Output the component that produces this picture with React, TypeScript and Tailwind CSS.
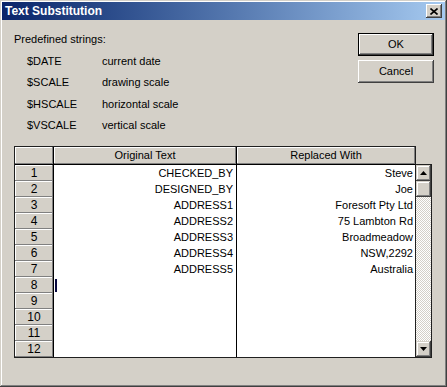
const rows: [string, string][] = [
  ['CHECKED_BY', 'Steve'],
  ['DESIGNED_BY', 'Joe'],
  ['ADDRESS1', 'Foresoft Pty Ltd'],
  ['ADDRESS2', '75 Lambton Rd'],
  ['ADDRESS3', 'Broadmeadow'],
  ['ADDRESS4', 'NSW,2292'],
  ['ADDRESS5', 'Australia'],
  ['', ''],
  ['', ''],
  ['', ''],
  ['', ''],
  ['', ''],
];

const strings = [
  ['$DATE', 'current date'],
  ['$SCALE', 'drawing scale'],
  ['$HSCALE', 'horizontal scale'],
  ['$VSCALE', 'vertical scale'],
];

export default function App() {
  return (
    <div className="w-[447px] h-[387px] bg-[#d4d0c8] p-[2px] flex flex-col font-['Liberation_Sans',Arial,sans-serif] text-[11px] text-black shadow-[inset_-1px_-1px_0_#404040,inset_1px_1px_0_#d4d0c8,inset_-2px_-2px_0_#808080,inset_2px_2px_0_#ffffff]">
      {/* Title bar */}
      <div className="h-[18px] flex items-center justify-between pl-[3px] pr-[3px] bg-gradient-to-r from-[#0a246a] to-[#a6caf0]">
        <span className="text-white font-bold text-[12px] leading-[13px]">Text Substitution</span>
        <div className="w-[16px] h-[14px] bg-[#d4d0c8] flex items-center justify-center shadow-[inset_-1px_-1px_0_#404040,inset_1px_1px_0_#ffffff,inset_-2px_-2px_0_#808080]">
          <svg width="8" height="7" viewBox="0 0 8 7">
            <path d="M0.5 0.5 L7.5 6.5 M7.5 0.5 L0.5 6.5" stroke="#000" strokeWidth="1.6" />
          </svg>
        </div>
      </div>

      {/* Top section */}
      <div className="h-[126px] flex justify-between pl-[12px] pr-[11px]">
        <div className="pt-[13px]">
          <p className="leading-[13px]">Predefined strings:</p>
          <div className="mt-[9px] pl-[13px]">
            {strings.map(([k, v]) => (
              <div key={k} className="h-[21.33px] flex leading-[13px]">
                <span className="w-[75px]">{k}</span>
                <span>{v}</span>
              </div>
            ))}
          </div>
        </div>
        <div className="pt-[13px] flex flex-col gap-[4px]">
          <button className="w-[76px] h-[23px] border border-black bg-[#d4d0c8] leading-[13px] shadow-[inset_-1px_-1px_0_#404040,inset_1px_1px_0_#ffffff,inset_-2px_-2px_0_#808080]">
            OK
          </button>
          <button className="w-[76px] h-[23px] bg-[#d4d0c8] leading-[13px] shadow-[inset_-1px_-1px_0_#404040,inset_1px_1px_0_#ffffff,inset_-2px_-2px_0_#808080,inset_2px_2px_0_#d4d0c8]">
            Cancel
          </button>
        </div>
      </div>

      {/* Grid */}
      <div className="pl-[12px] flex">
        <div className="w-[402px] border border-[#202020] flex flex-col">
          <div className="h-[18px] flex border-b border-black">
            <div className="w-[39px] border-r border-black bg-[#d4d0c8] shadow-[inset_-1px_-1px_0_#808080,inset_1px_1px_0_#ffffff]" />
            <div className="w-[183px] border-r border-black bg-[#d4d0c8] text-center leading-[17px] shadow-[inset_-1px_-1px_0_#808080,inset_1px_1px_0_#ffffff]">
              Original Text
            </div>
            <div className="flex-1 bg-[#d4d0c8] text-center leading-[17px] shadow-[inset_-1px_-1px_0_#808080,inset_1px_1px_0_#ffffff]">
              Replaced With
            </div>
          </div>
          {rows.map(([orig, repl], i) => (
            <div key={i} className="h-[16px] flex leading-[16px]">
              <div className="w-[39px] border-r border-black bg-[#d4d0c8] text-center text-[12px] shadow-[inset_-1px_-1px_0_#808080,inset_1px_1px_0_#ffffff]">
                {i + 1}
              </div>
              <div className="w-[183px] border-r border-black bg-white flex justify-end pr-[3px]">
                {i === 7 && <span className="mr-auto ml-[1px] mt-[2px] w-[2px] h-[13px] bg-[#0a0a40]" />}
                {orig}
              </div>
              <div className="flex-1 bg-white text-right pr-[2px]">{repl}</div>
            </div>
          ))}
        </div>

        {/* Scrollbar */}
        <div className="flex flex-col">
          <div className="h-[18px]" />
          <div className="w-[16px] h-[194px] border-t border-r border-b border-[#202020] flex flex-col">
            <div className="h-[16px] bg-[#d4d0c8] flex items-center justify-center shadow-[inset_-1px_-1px_0_#404040,inset_1px_1px_0_#d4d0c8,inset_-2px_-2px_0_#808080,inset_2px_2px_0_#ffffff]">
              <svg width="7" height="4" viewBox="0 0 7 4">
                <path d="M3.5 0 L7 4 L0 4 Z" fill="#000" />
              </svg>
            </div>
            <div className="h-[16px] bg-[#d4d0c8] shadow-[inset_-1px_-1px_0_#404040,inset_1px_1px_0_#d4d0c8,inset_-2px_-2px_0_#808080,inset_2px_2px_0_#ffffff]" />
            <div className="flex-1 bg-[image:repeating-conic-gradient(#d4d0c8_0_25%,#ffffff_0_50%)] bg-[length:2px_2px]" />
            <div className="h-[16px] bg-[#d4d0c8] flex items-center justify-center shadow-[inset_-1px_-1px_0_#404040,inset_1px_1px_0_#d4d0c8,inset_-2px_-2px_0_#808080,inset_2px_2px_0_#ffffff]">
              <svg width="7" height="4" viewBox="0 0 7 4">
                <path d="M0 0 L7 0 L3.5 4 Z" fill="#000" />
              </svg>
            </div>
          </div>
        </div>
      </div>
    </div>
  );
}
